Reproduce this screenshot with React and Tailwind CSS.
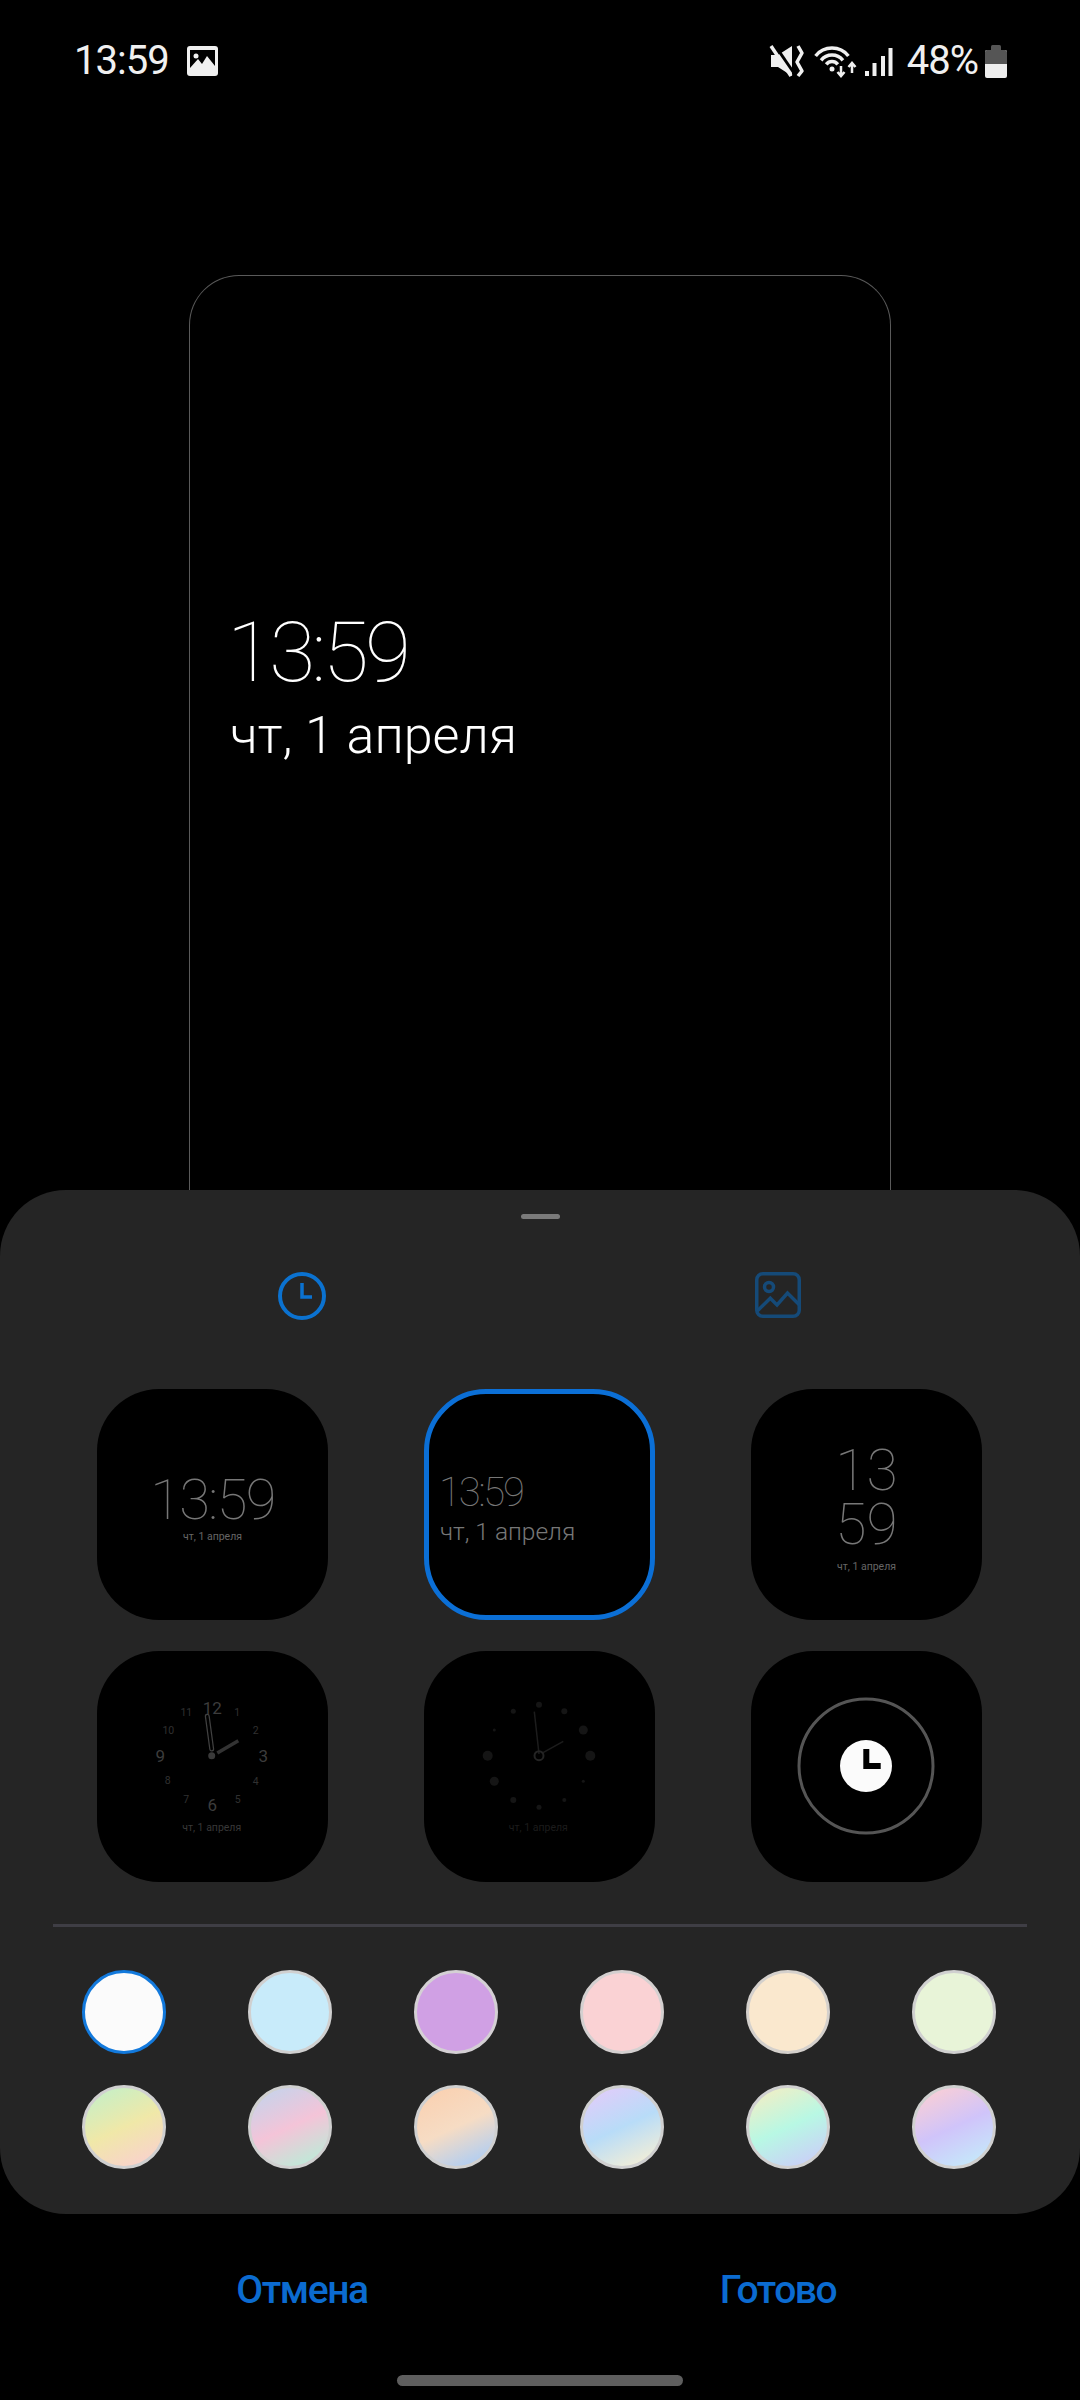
import React from "react";

const DATE = "чт, 1 апреля";

const solidSwatches = [
  "bg-[#fbfbfb] border-[#1279dc]",
  "bg-[#c8ebfa] border-[#d0d0d0]",
  "bg-[#d0a0e4] border-[#d4d0d4]",
  "bg-[#fad2d4] border-[#d4d0d0]",
  "bg-[#fae8ce] border-[#d4d0cc]",
  "bg-[#e8f4d8] border-[#d0d0d0]",
];

const gradientSwatches = [
  "bg-[linear-gradient(155deg,#c4f0c8_8%,#f0e8a8_50%,#fad0d0_92%)]",
  "bg-[linear-gradient(155deg,#c4d4ec_8%,#f4c4d8_50%,#b8eed8_92%)]",
  "bg-[linear-gradient(155deg,#fad0b0_8%,#f6dcc4_50%,#a8ccf8_92%)]",
  "bg-[linear-gradient(155deg,#e2ccfa_8%,#b8dcf8_50%,#f8f0d4_92%)]",
  "bg-[linear-gradient(155deg,#f4eec4_8%,#b8f8e4_50%,#ccccfa_92%)]",
  "bg-[linear-gradient(155deg,#fccfd4_8%,#d0c4fa_50%,#c4ecfa_92%)]",
];

const bigNumbers = [
  ["12", 115.3, 56.5],
  ["3", 166.3, 104.7],
  ["6", 115.3, 153.7],
  ["9", 63.3, 104.7],
];

const smallNumbers = [
  ["1", 140.3, 61.3],
  ["2", 158.7, 79.7],
  ["4", 158.7, 130.3],
  ["5", 140.7, 148],
  ["7", 89.3, 148],
  ["8", 70.7, 129.7],
  ["10", 71.3, 79.7],
  ["11", 89.3, 61.3],
];

const dots = [
  [115, 53.7, 3],
  [140.3, 60.3, 3],
  [159.3, 79, 4.5],
  [166.3, 104.7, 5],
  [159.3, 130.3, 1.5],
  [140.3, 149, 2],
  [115, 156.3, 2.5],
  [89.3, 149, 3],
  [70.3, 130.3, 4.5],
  [63.7, 104.7, 5],
  [70.3, 79, 1.5],
  [89.3, 60.3, 2.5],
];

const StatusBar = () => (
  <div className="h-[122px] flex items-center justify-between pl-[74px] pr-[73px] text-[#f0f0f0] text-[40px] leading-[40px] tracking-[-1px]">
    <div className="flex items-center gap-[18px]">
      <span>13:59</span>
      <svg width="31" height="30" viewBox="0 0 31 30">
        <rect width="31" height="30" rx="3" fill="#f0f0f0" />
        <rect x="3" y="4" width="25" height="22" fill="#000" />
        <path d="M3 22L11 13L15 18L20 10L28 20V27H3Z" fill="#f0f0f0" />
        <circle cx="9" cy="10" r="2.5" fill="#f0f0f0" />
      </svg>
    </div>
    <div className="flex items-center">
      <svg width="36" height="34" viewBox="0 0 36 34">
        <path d="M2 11H9L23 2V32L9 23H2Z" fill="#f0f0f0" />
        <path d="M5 0L27 32" stroke="#000" strokeWidth="3" />
        <path d="M2 2L22 32" stroke="#f0f0f0" strokeWidth="3.5" />
        <path d="M29 2L33 9L28 18L33 27L29 32" fill="none" stroke="#f0f0f0" strokeWidth="3.5" strokeLinejoin="round" />
      </svg>
      <svg className="ml-[9px]" width="45" height="34" viewBox="0 0 45 34" fill="none" stroke="#f0f0f0" strokeWidth="3.5">
        <path d="M1.6 12A21 21 0 0 1 34.4 12" />
        <path d="M7.1 16.3A14 14 0 0 1 28.9 16.3" />
        <path d="M12.2 20.3A7.5 7.5 0 0 1 23.8 20.3" />
        <circle cx="18" cy="25" r="2.5" fill="#f0f0f0" stroke="none" />
        <path d="M27 22V31M23.5 28L27 32L30.5 28" strokeWidth="2.5" />
        <path d="M38 29V20M34.5 23L38 19L41.5 23" strokeWidth="2.5" />
      </svg>
      <svg className="ml-[6px]" width="28" height="31" viewBox="0 0 28 31" fill="#f0f0f0">
        <rect x="0" y="25" width="4" height="5" />
        <rect x="7.5" y="17" width="4" height="13" />
        <rect x="16" y="10" width="4" height="20" />
        <rect x="23.5" y="2" width="4" height="28" />
      </svg>
      <span className="ml-[14px]">48%</span>
      <svg className="ml-[7px]" width="22" height="33" viewBox="0 0 22 33">
        <rect x="6" y="0" width="10" height="8" rx="1.5" fill="#555" />
        <rect x="0" y="5" width="22" height="28" rx="2" fill="#eee" />
        <path d="M0 19V7a2 2 0 0 1 2-2H20a2 2 0 0 1 2 2V19Z" fill="#555" />
      </svg>
    </div>
  </div>
);

const ClockTab = () => (
  <svg width="48" height="48" viewBox="0 0 48 48" fill="none" stroke="#0b72d0" strokeWidth="4">
    <circle cx="24" cy="24" r="22" />
    <path d="M24 11V25H34" strokeWidth="3.5" />
  </svg>
);

const ImageTab = () => (
  <svg width="46" height="46" viewBox="0 0 46 46" fill="none" stroke="#154a78" strokeWidth="3.5">
    <rect x="1.75" y="1.75" width="42.5" height="42.5" rx="6" />
    <circle cx="14" cy="15" r="4.5" />
    <path d="M1.5 39.7L15.3 26.3L22 33L32.5 21L44.5 33" />
  </svg>
);

const Tile = ({ selected, className = "", children }) => (
  <div
    className={`w-[231px] h-[231px] rounded-[62px] bg-black overflow-hidden ${
      selected ? "border-[5px] border-[#0b6fd6]" : ""
    } ${className}`}
  >
    {children}
  </div>
);

const AnalogClock = () => (
  <svg width="231" height="231" viewBox="0 0 231 231">
    {bigNumbers.map(([n, x, y]) => (
      <text key={n} x={x} y={y} fontSize="17" fill="#3c3c3c" textAnchor="middle" dominantBaseline="central">
        {n}
      </text>
    ))}
    {smallNumbers.map(([n, x, y]) => (
      <text key={n} x={x} y={y} fontSize="10.5" fill="#303030" textAnchor="middle" dominantBaseline="central">
        {n}
      </text>
    ))}
    <path d="M110.3 65.3L114.7 98" stroke="#404040" strokeWidth="5" strokeLinecap="round" />
    <path d="M110.3 65.3L114.7 98" stroke="#000" strokeWidth="2.5" strokeLinecap="round" />
    <path d="M120.3 102L141.3 89.7" stroke="#333" strokeWidth="3.5" />
    <circle cx="114.7" cy="104.7" r="3.5" fill="#3a3a3a" />
    <text x="114.7" y="176" fontSize="10.5" fill="#383838" textAnchor="middle" dominantBaseline="central">
      {DATE}
    </text>
  </svg>
);

const DotClock = () => (
  <svg width="231" height="231" viewBox="0 0 231 231">
    {dots.map(([x, y, r]) => (
      <circle key={`${x}-${y}`} cx={x} cy={y} r={r} fill="#151515" />
    ))}
    <path d="M110.3 60.7L115 103" stroke="#1c1c1c" strokeWidth="1.5" />
    <path d="M117.7 102.3L139.3 90.3" stroke="#1c1c1c" strokeWidth="1.5" />
    <circle cx="115" cy="104.7" r="4.5" fill="none" stroke="#242424" strokeWidth="2" />
    <text x="114.3" y="176" fontSize="10.5" fill="#1c1c1c" textAnchor="middle" dominantBaseline="central">
      {DATE}
    </text>
  </svg>
);

const IconClock = () => (
  <svg width="231" height="231" viewBox="0 0 231 231">
    <circle cx="115" cy="115" r="67" fill="none" stroke="#555" strokeWidth="3" />
    <circle cx="115" cy="115" r="26" fill="#fbfbfb" />
    <path d="M112.3 98H118.3V112H129.7V118H112.3Z" fill="#000" />
  </svg>
);

export default function App() {
  return (
    <div className="w-[1080px] h-[2400px] bg-black flex flex-col font-['Roboto',sans-serif]">
      <StatusBar />

      {/* preview */}
      <div className="h-[1068px] pt-[153px] flex justify-center">
        <div className="w-[702px] h-full rounded-t-[50px] border-t-[1.5px] border-x-[1.5px] border-[#5a5a5a] pt-[335px] pl-[37px] text-white">
          <div className="text-[84px] leading-[84px] font-thin tracking-[-3.7px]">13:59</div>
          <div className="mt-[15px] ml-[3px] text-[52px] leading-[52px] font-light">{DATE}</div>
        </div>
      </div>

      {/* bottom sheet */}
      <div className="h-[1024px] rounded-[66px] bg-[#252525] flex flex-col">
        <div className="mt-[24px] mx-auto w-[39px] h-[5px] rounded-full bg-[#7a7a7a]" />

        <div className="mt-[53px] px-[64px] grid grid-cols-2 justify-items-center">
          <ClockTab />
          <ImageTab />
        </div>

        <div className="mt-[69px] pl-[97px] grid grid-cols-[repeat(3,231px)] gap-x-[96px] gap-y-[31px]">
          <Tile className="flex flex-col items-center pt-[83px] text-[#777]">
            <div className="text-[56px] leading-[56px] font-thin tracking-[-1.6px]">13:59</div>
            <div className="mt-px text-[10.5px] leading-[16px] text-[#666]">{DATE}</div>
          </Tile>
          <Tile selected className="pt-[79px] pl-[11px] text-[#777]">
            <div className="-ml-px text-[40px] leading-[40px] font-thin tracking-[-2.2px]">13:59</div>
            <div className="mt-[6px] text-[24.5px] leading-[25px] font-light">{DATE}</div>
          </Tile>
          <Tile className="flex flex-col items-center pt-[55px] text-[#777]">
            <div className="text-[57px] leading-[54px] font-thin text-center">
              13
              <br />
              59
            </div>
            <div className="mt-[7px] text-[10.5px] leading-[16px] text-[#666]">{DATE}</div>
          </Tile>
          <Tile>
            <AnalogClock />
          </Tile>
          <Tile>
            <DotClock />
          </Tile>
          <Tile>
            <IconClock />
          </Tile>
        </div>

        <div className="mt-[42px] ml-[53px] w-[974px] h-[3px] bg-[#3f3e45]" />

        <div className="mt-[43px] pl-[82px] grid grid-cols-[repeat(6,84px)] gap-x-[82px] gap-y-[31px]">
          {solidSwatches.map((c) => (
            <div key={c} className={`w-[84px] h-[84px] rounded-full border-[3px] ${c}`} />
          ))}
          {gradientSwatches.map((c) => (
            <div key={c} className={`w-[84px] h-[84px] rounded-full border-[3px] border-[#d0d0d0] bg-origin-border ${c}`} />
          ))}
        </div>
      </div>

      {/* actions */}
      <div className="mt-[54px] px-[64px] grid grid-cols-2 justify-items-center text-[#0b6bd0] text-[39px] leading-[44px] font-medium tracking-[-1.4px]">
        <span>Отмена</span>
        <span>Готово</span>
      </div>

      <div className="mt-[63px] mx-auto w-[286px] h-[11px] rounded-full bg-[#5e5e5e]" />
    </div>
  );
}
